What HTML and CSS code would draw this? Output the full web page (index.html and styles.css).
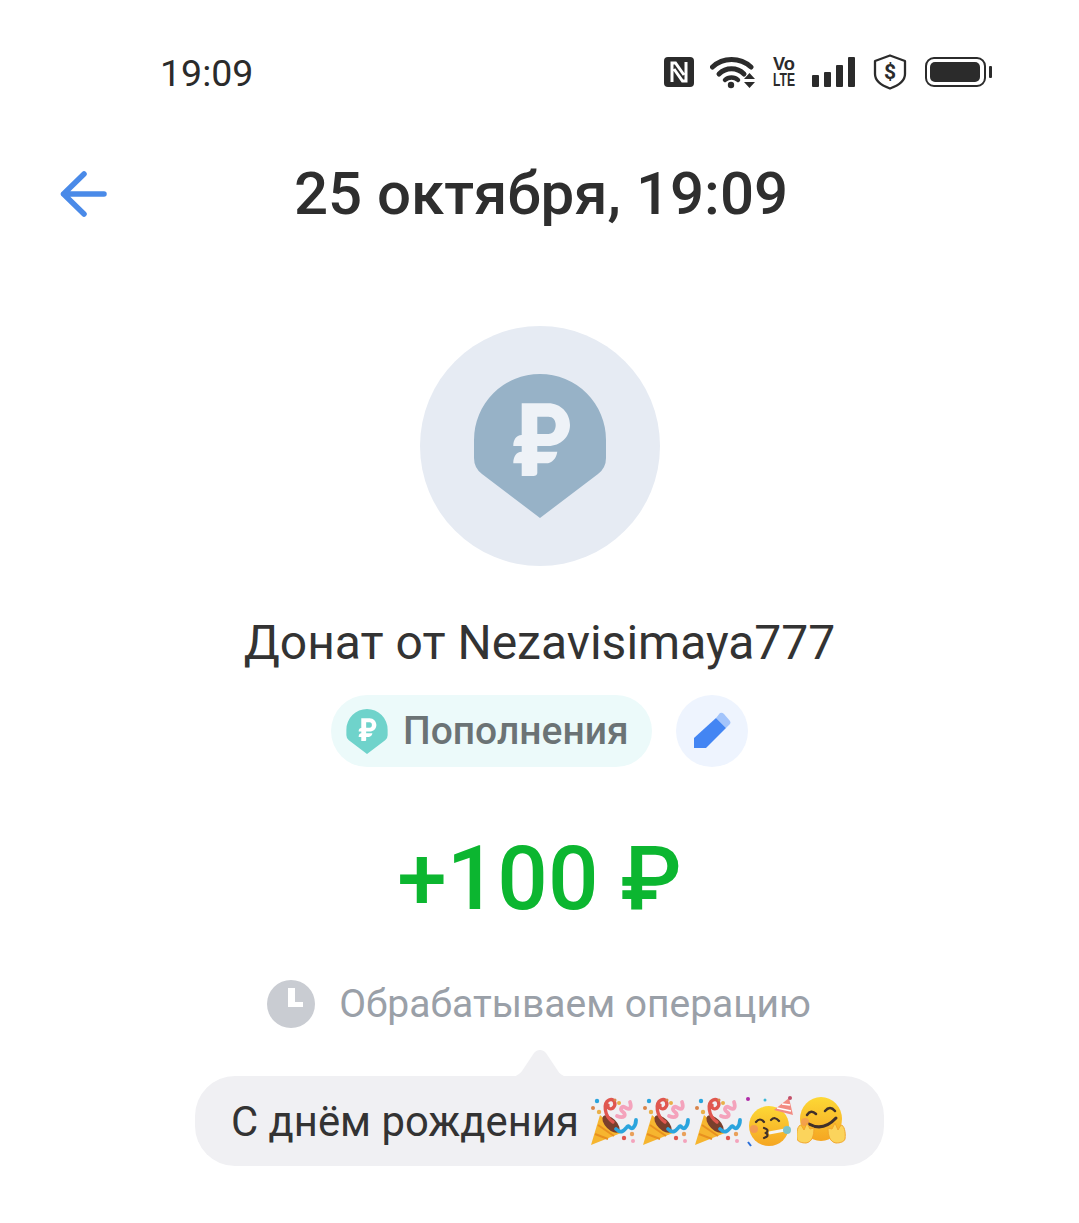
FILE: index.html
```html
<!DOCTYPE html>
<html lang="ru">
<head>
<meta charset="utf-8">
<title>Донат</title>
<link rel="stylesheet" href="styles.css">
</head>
<body>
<svg class="defs" width="0" height="0" aria-hidden="true">
  <defs>
    <path id="rub" fill-rule="evenodd" d="M47.7 29.3H74.3C86.5 29.3 96 39 96 51S86.500 72 74.300 72H63.300V77.700H83.300C82.300 84.500 78 89.300 72 89.300H63.300V99C63.300 101 61.500 102 59.500 102H47.700V89.300H39.300C39.300 83 42 77.700 47.700 77.700V72H39.300C39.300 66 42 61 47.700 61ZM63.300 42.700V60H74.300C79 60 81.700 56 81.700 51S79 42.700 74.300 42.700Z"/>
    <path id="pin" d="M0 66A66 66 0 0 1 132 66V84Q132 94 124 100L66 144L8 100Q0 94 0 84Z"/>
    <g id="popper">
      <path d="M2 50 L11 20 L32 38Z" fill="#f6b52f"/>
      <path d="M6 39L19 44M9 30L25 41" stroke="#e8901f" stroke-width="2" fill="none"/>
      <ellipse cx="22" cy="29" rx="5.500" ry="11" transform="rotate(-45 22 29)" fill="#7a3f2c"/>
      <path d="M24 27C15 21 14 8 20 5C25 3 28 9 24 13C21 15 18 13 19 10" stroke="#e0574f" stroke-width="3.400" fill="none" stroke-linecap="round"/>
      <path d="M28 21C35 24 38 20 34 17C30 14 33 10 37 13C41 15 43 13 41 7" stroke="#f4a3bc" stroke-width="3.800" fill="none" stroke-linecap="round"/>
      <path d="M27 34C33 40 36 34 38 32C40 29 41 35 44 33C46 31 47 29 47 25" stroke="#2ba4dd" stroke-width="3.800" fill="none" stroke-linecap="round"/>
      <circle cx="8" cy="6" r="2.200" fill="#2ba4dd"/><circle cx="4" cy="13" r="2" fill="#d9844a"/><circle cx="10" cy="17" r="2.200" fill="#e9b04a"/>
      <circle cx="30" cy="8" r="2" fill="#e9b04a"/><circle cx="26" cy="5" r="1.500" fill="#d9844a"/>
      <circle cx="43" cy="39" r="2.200" fill="#e9a05a"/><circle cx="35" cy="43" r="2.200" fill="#e0574f"/><circle cx="44" cy="46" r="2" fill="#f4a3bc"/>
    </g>
    <linearGradient id="face" x1="0" y1="0" x2="0" y2="1"><stop offset="0" stop-color="#fdd835"/><stop offset="1" stop-color="#f5a623"/></linearGradient>
  </defs>
</svg>

<main class="screen">
  <header class="status">
    <span class="time">19:09</span>
    <div class="status-icons">
      <svg width="30" height="30" viewBox="0 0 30 30"><rect width="30" height="30" rx="4" fill="#2b2b2b"/><path d="M8 25V6H11.500L20 18M22 5V24H18.500L10 12" fill="none" stroke="#fff" stroke-width="3"/></svg>
      <svg width="46" height="34" viewBox="0 0 46 34"><path d="M2.500 12C13 2 30 2 41 12" fill="none" stroke="#2b2b2b" stroke-width="5" stroke-linecap="round"/><path d="M9 19C16 12 27 12 34 19" fill="none" stroke="#2b2b2b" stroke-width="5" stroke-linecap="round"/><path d="M15 25C18.500 21.500 24.500 21.500 28 25" fill="none" stroke="#2b2b2b" stroke-width="4.500" stroke-linecap="round"/><circle cx="21" cy="30" r="3.200" fill="#2b2b2b"/><path d="M34 24L39.500 18L45 24ZM34 27L39.500 33L45 27Z" fill="#2b2b2b"/></svg>
      <svg class="volte" width="24" height="32" viewBox="0 0 24 32"><text class="vo" x="0" y="14" textLength="22" lengthAdjust="spacingAndGlyphs">Vo</text><text class="vo" x="0" y="30" textLength="22" lengthAdjust="spacingAndGlyphs">LTE</text></svg>
      <svg class="signal" width="43" height="30" viewBox="0 0 43 30"><rect x="0" y="18" width="7" height="12" rx="1" fill="#2b2b2b"/><rect x="12" y="15" width="7" height="15" rx="1" fill="#2b2b2b"/><rect x="24" y="8" width="7" height="22" rx="1" fill="#2b2b2b"/><rect x="36" y="0" width="7" height="30" rx="1" fill="#2b2b2b"/></svg>
      <svg class="shield" width="34" height="36" viewBox="0 0 34 36"><path d="M17 1.500L32 7V20C32 27 24 32 17 34.500C10 32 2 27 2 20V7Z" fill="none" stroke="#2b2b2b" stroke-width="2.300" stroke-linejoin="round"/><text class="dollar" x="17" y="24.500" text-anchor="middle">$</text></svg>
      <svg width="67" height="30" viewBox="0 0 67 30"><rect x="1" y="1" width="59" height="28" rx="8" fill="none" stroke="#2b2b2b" stroke-width="2"/><rect x="5" y="5" width="50" height="20" rx="5" fill="#2b2b2b"/><rect x="64" y="9" width="3" height="12" rx="1" fill="#2b2b2b"/></svg>
    </div>
  </header>

  <div class="topbar">
    <svg class="back" width="48" height="46" viewBox="0 0 48 46"><path d="M3.500 23H44M24 3L3.500 23L24 43" fill="none" stroke="#4a8ae8" stroke-width="5.500" stroke-linecap="round" stroke-linejoin="round"/></svg>
    <h1 class="title">25 октября, 19:09</h1>
  </div>

  <div class="avatar">
    <svg width="132" height="144" viewBox="0 0 132 144"><use href="#pin" fill="#97b2c7"/><use href="#rub" fill="#eef2f7"/></svg>
  </div>

  <p class="name">Донат от Nezavisimaya777</p>

  <div class="tags">
    <div class="chip">
      <svg width="42" height="45" viewBox="0 0 132 144"><use href="#pin" fill="#6fd3cb"/><use href="#rub" fill="#fff"/></svg>
      <span class="chip-label">Пополнения</span>
    </div>
    <button class="edit" type="button" aria-label="Изменить">
      <svg width="38" height="38" viewBox="-1 0 38 38"><path d="M26 1Q28 0 30 2L36 9Q37 11 36 12L32 16L22 6Z" fill="#a3c4fb"/><path d="M22 6L32 16L12 36H0V26Z" fill="#4385f3"/></svg>
    </button>
  </div>

  <div class="amount">+100 ₽</div>

  <div class="state">
    <svg width="48" height="48" viewBox="0 0 48 48"><circle cx="24" cy="24" r="24" fill="#c9ccd2"/><path d="M21 8H28V22H36V27H21Z" fill="#fff"/></svg>
    <span class="state-label">Обрабатываем операцию</span>
  </div>

  <div class="bubble">
    <svg class="tail" width="64" height="29" viewBox="0 0 64 29"><path d="M0 28C6 28 10 27 14 22L26 4C29 0 35 0 38 4L50 22C53 27 58 28 64 28V29H0Z" fill="#f0f0f3"/></svg>
    <span class="bubble-text">С днём рождения</span>
    <span class="emojis">
      <svg width="52" height="52" viewBox="0 0 52 52"><use href="#popper"/></svg>
      <svg width="52" height="52" viewBox="0 0 52 52"><use href="#popper"/></svg>
      <svg width="52" height="52" viewBox="0 0 52 52"><use href="#popper"/></svg>
      <svg width="52" height="52" viewBox="0 0 52 52">
        <circle cx="24" cy="31" r="20" fill="url(#face)"/>
        <path d="M29 15L44 3L48 20Z" fill="#f28b82"/><path d="M32 13L46 16M37 9L45 10" stroke="#fff" stroke-width="1.500"/><circle cx="45" cy="3" r="2" fill="#c2506a"/>
        <path d="M11 27Q15 22 19 27M26 25Q30 21 34 26" stroke="#40302a" stroke-width="2.200" fill="none" stroke-linecap="round"/>
        <circle cx="9" cy="34" r="4" fill="#f0866b" opacity=".6"/>
        <path d="M19 33Q25 35 21 38Q25 41 19 43" stroke="#40302a" stroke-width="2.200" fill="none" stroke-linecap="round"/>
        <path d="M24 38L40 35" stroke="#f4f4f4" stroke-width="3"/><circle cx="42" cy="35" r="4" fill="#7cc3c8"/>
        <circle cx="3" cy="4" r="2" fill="#b02ca8"/><circle cx="20" cy="5" r="1.500" fill="#3cb8d8"/><path d="M3 47L6 51" stroke="#2b6fd8" stroke-width="2"/>
      </svg>
      <svg width="52" height="52" viewBox="0 0 52 52">
        <ellipse cx="24" cy="24" rx="21" ry="22" fill="url(#face)"/>
        <path d="M10 20Q14 14 19 19M28 16Q33 10 38 16" stroke="#40302a" stroke-width="2.500" fill="none" stroke-linecap="round"/>
        <path d="M12 29Q26 37 39 23" stroke="#40302a" stroke-width="3" fill="none" stroke-linecap="round"/>
        <circle cx="8" cy="27" r="4" fill="#f0866b" opacity=".5"/>
        <path d="M0 44C-1 37 1 30 4 30L7 35L10 28L13 34L17 33C17 41 15 47 9 48C5 48 1 47 0 44Z" fill="#fbd45c" stroke="#f2a62c" stroke-width="1"/>
        <path d="M48 44C49 37 47 30 44 30L41 35L38 28L35 34L31 33C31 41 33 47 39 48C43 48 47 47 48 44Z" fill="#fbd45c" stroke="#f2a62c" stroke-width="1"/>
      </svg>
    </span>
  </div>
</main>
</body>
</html>
```
FILE: styles.css
```css
* { box-sizing: border-box; }
html, body { margin: 0; padding: 0; background: #fff; }
.defs { position: absolute; }
.screen {
  width: 1079px;
  height: 1223px;
  overflow: hidden;
  display: flex;
  flex-direction: column;
  align-items: center;
  font-family: Roboto, "Noto Sans", sans-serif;
}
.status {
  align-self: stretch;
  height: 36px;
  margin-top: 54px;
  padding: 0 87px 0 160px;
  display: flex;
  align-items: center;
  justify-content: space-between;
}
.time { font-size: 37.5px; color: #2b2b2b; line-height: 36px; padding-top: 2px; }
.status-icons { display: flex; align-items: center; gap: 16px; }
.volte { overflow: visible; margin-left: 1px; }
.signal { margin-left: -1px; }
.shield { margin: 0 2px 0 2px; }
.vo { font: 700 19px "Liberation Sans", sans-serif; fill: #2b2b2b; }
.dollar { font: 700 21px Roboto, sans-serif; fill: #2b2b2b; }
.topbar {
  align-self: stretch;
  height: 70px;
  margin-top: 69px;
  position: relative;
  display: flex;
  align-items: center;
  justify-content: center;
}
.back { position: absolute; left: 60px; top: 12px; }
.title { margin: 0; padding-left: 3px; font-size: 60px; font-weight: 500; color: #2e2e2e; line-height: 70px; }
.avatar {
  width: 240px;
  height: 240px;
  margin-top: 97px;
  border-radius: 50%;
  background: #e6ebf3;
  display: flex;
  align-items: center;
  justify-content: center;
}
.name { margin: 48px 0 0; font-size: 48px; color: #333; line-height: 58px; }
.tags { display: flex; gap: 24px; margin-top: 23px; }
.chip {
  height: 72px;
  width: 321px;
  border-radius: 36px;
  background: #ecfafa;
  padding: 0 0 0 15px;
  display: flex;
  align-items: center;
  gap: 15px;
}
.chip-label { font-size: 39px; font-weight: 500; color: #6b7375; }
.edit {
  width: 72px;
  height: 72px;
  padding: 0;
  border: 0;
  border-radius: 50%;
  background: #eef4fe;
  display: flex;
  align-items: center;
  justify-content: center;
}
.amount { margin-top: 60px; font-size: 89px; font-weight: 500; color: #0cb630; line-height: 104px; }
.state { display: flex; align-items: center; gap: 24px; margin-top: 49px; height: 48px; padding-right: 1px; }
.state-label { font-size: 39px; color: #9aa0a8; }
.bubble {
  position: relative;
  width: 689px;
  height: 90px;
  margin-top: 48px;
  padding: 0 0 0 36px;
  border-radius: 40px;
  background: #f0f0f3;
  display: flex;
  align-items: center;
  gap: 10px;
}
.tail { position: absolute; left: 313px; top: -27px; }
.bubble-text { font-size: 41.8px; color: #333; }
.emojis { display: flex; align-items: center; }
```
